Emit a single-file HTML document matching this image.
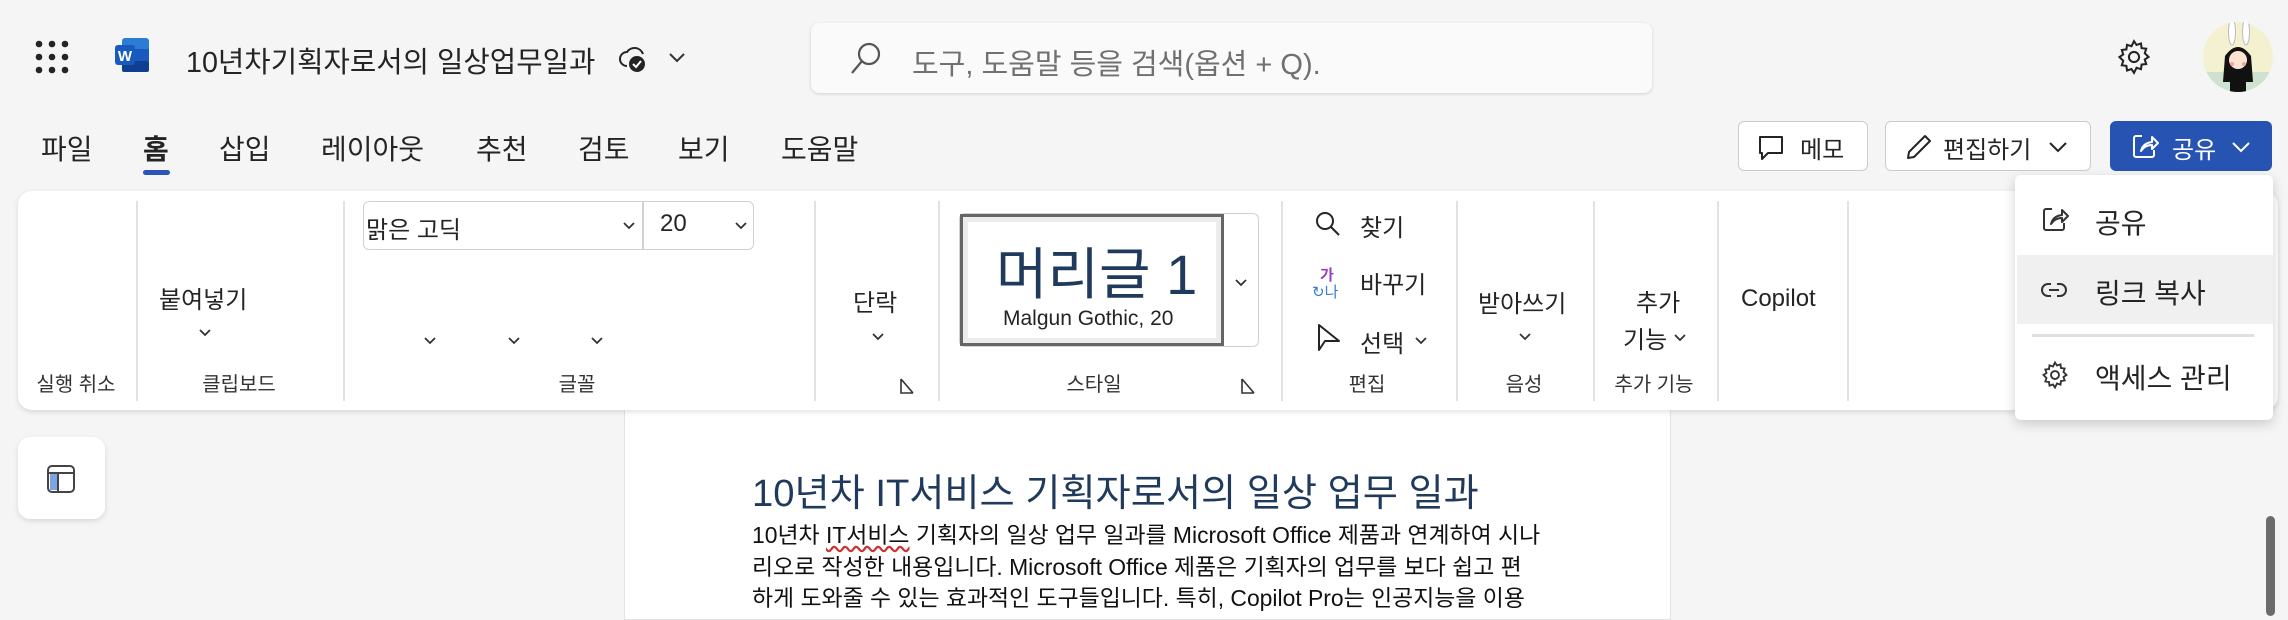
<!DOCTYPE html>
<html><head><meta charset="utf-8">
<style>
*{margin:0;padding:0;box-sizing:border-box}
body{width:2288px;height:606px;overflow:hidden;background:#f5f5f5;position:relative;font-family:"Liberation Sans","Noto Sans CJK KR",sans-serif;color:#242424}
.a{position:absolute;white-space:nowrap}
.dv{position:absolute;top:201px;width:2px;height:200px;background:#e1e1e1}
.lbl{position:absolute;top:368px;font-size:20px;color:#333;transform:translateX(-50%)}
.cv{position:absolute}
</style></head><body>
<svg width="0" height="0" style="position:absolute"><defs><symbol id="ch" viewBox="0 0 14 9"><path d="M2 2l5 5l5-5" stroke="#333" stroke-width="1.8" fill="none"/></symbol></defs></svg>
<!-- grid -->
<svg class="a" style="left:34px;top:39px" width="36" height="36" viewBox="0 0 36 36" fill="#242424">
<circle cx="5" cy="5" r="3.3"/><circle cx="18" cy="5" r="3.3"/><circle cx="31" cy="5" r="3.3"/>
<circle cx="5" cy="18" r="3.3"/><circle cx="18" cy="18" r="3.3"/><circle cx="31" cy="18" r="3.3"/>
<circle cx="5" cy="31" r="3.3"/><circle cx="18" cy="31" r="3.3"/><circle cx="31" cy="31" r="3.3"/></svg>
<!-- word icon -->
<svg class="a" style="left:114px;top:37px" width="36" height="36" viewBox="0 0 36 36">
<rect x="8" y="1" width="27" height="34" rx="3" fill="#2b7cd3"/><rect x="8" y="12" width="27" height="12" fill="#185abd"/><rect x="8" y="24" width="27" height="11" rx="2" fill="#103f91"/>
<rect x="1" y="8" width="20" height="20" rx="3" fill="#185abd"/><text x="11" y="24" font-size="15" fill="#fff" text-anchor="middle" font-family="Liberation Sans" font-weight="bold">W</text></svg>
<div class="a" style="left:186px;top:40px;font-size:28.7px;color:#242424">10년차기획자로서의 일상업무일과</div>
<svg class="a" style="left:617px;top:44px" width="32" height="30" viewBox="0 0 32 30"><path d="M10 22a7 7 0 0 1 0-14a9 9 0 0 1 16 2" fill="none" stroke="#242424" stroke-width="2"/><circle cx="20" cy="20" r="8" fill="#242424"/><path d="M16 20l3 3l5-6" stroke="#fff" stroke-width="2" fill="none"/></svg>
<svg class="a" style="left:668px;top:52px" width="18" height="12"><path d="M2 2l7 7l7-7" stroke="#333" stroke-width="2" fill="none"/></svg>
<!-- search -->
<div class="a" style="left:811px;top:23px;width:841px;height:70px;background:#fafafa;border-radius:8px;box-shadow:0 1px 3px rgba(0,0,0,.15)"></div>
<svg class="a" style="left:848px;top:40px" width="36" height="36" viewBox="0 0 36 36"><circle cx="21" cy="14" r="10" fill="none" stroke="#555" stroke-width="2.2"/><path d="M14 21L4 33" stroke="#555" stroke-width="2.2"/></svg>
<div class="a" style="left:912px;top:41px;font-size:29px;color:#707070">도구, 도움말 등을 검색(옵션 + Q).</div>
<!-- gear -->
<svg class="a" style="left:2115px;top:38px" width="38" height="38" viewBox="0 0 24 24" fill="none" stroke="#242424" stroke-width="1.3"><circle cx="12" cy="12" r="3.2"/><path d="M12 2l1.6 2.4 2.8-.9.4 2.9 2.9.4-.9 2.8L21.2 12l-2.4 1.6.9 2.8-2.9.4-.4 2.9-2.8-.9L12 22l-1.6-2.4-2.8.9-.4-2.9-2.9-.4.9-2.8L2.8 12l2.4-1.6-.9-2.8 2.9-.4.4-2.9 2.8.9z"/></svg>
<!-- avatar -->
<svg class="a" style="left:2203px;top:22px" width="70" height="70" viewBox="0 0 70 70"><clipPath id="c"><circle cx="35" cy="35" r="35"/></clipPath><g clip-path="url(#c)"><rect width="70" height="70" fill="#f3f1cf"/><rect y="50" width="70" height="20" fill="#cfe1d1"/><ellipse cx="29" cy="10" rx="3.5" ry="13" fill="#fff" stroke="#bbb"/><ellipse cx="43" cy="10" rx="3.5" ry="13" fill="#fff" stroke="#bbb"/><path d="M22 34q13-18 26 0l2 26h-30z" fill="#111"/><ellipse cx="35" cy="38" rx="9" ry="9" fill="#fbe3d4"/><circle cx="29" cy="42" r="2" fill="#f5a0a0"/><circle cx="41" cy="42" r="2" fill="#f5a0a0"/><rect x="27" y="50" width="16" height="20" fill="#111"/></g></svg>
<!-- tabs -->
<div class="a" style="left:41px;top:128px;font-size:28px">파일</div>
<div class="a" style="left:143px;top:128px;font-size:28px;font-weight:bold">홈</div>
<div class="a" style="left:143px;top:170px;width:27px;height:5px;border-radius:3px;background:#2b55b4"></div>
<div class="a" style="left:219px;top:128px;font-size:28px">삽입</div>
<div class="a" style="left:321px;top:128px;font-size:28px">레이아웃</div>
<div class="a" style="left:476px;top:128px;font-size:28px">추천</div>
<div class="a" style="left:578px;top:128px;font-size:28px">검토</div>
<div class="a" style="left:678px;top:128px;font-size:28px">보기</div>
<div class="a" style="left:781px;top:128px;font-size:28px">도움말</div>
<!-- buttons -->
<div class="a" style="left:1738px;top:121px;width:130px;height:50px;background:#fff;border:1.5px solid #ccc;border-radius:6px"></div>
<svg class="a" style="left:1756px;top:133px" width="30" height="30" viewBox="0 0 30 30"><path d="M4 4h22v16H12l-6 6v-6H4z" fill="none" stroke="#242424" stroke-width="2" stroke-linejoin="round"/></svg>
<div class="a" style="left:1800px;top:130px;font-size:24px">메모</div>
<div class="a" style="left:1885px;top:121px;width:206px;height:50px;background:#fff;border:1.5px solid #ccc;border-radius:6px"></div>
<svg class="a" style="left:1905px;top:133px" width="28" height="28" viewBox="0 0 28 28"><path d="M20 3l5 5L9 24l-6 1 1-6z" fill="none" stroke="#242424" stroke-width="2" stroke-linejoin="round"/></svg>
<div class="a" style="left:1943px;top:130px;font-size:24px">편집하기</div>
<svg class="a" style="left:2048px;top:140px" width="20" height="14"><path d="M2 3l8 8l8-8" stroke="#242424" stroke-width="2" fill="none"/></svg>
<div class="a" style="left:2110px;top:121px;width:162px;height:50px;background:#2753b3;border-radius:6px"></div>
<svg class="a" style="left:2130px;top:131px" width="30" height="30" viewBox="0 0 30 30" fill="none" stroke="#fff" stroke-width="2"><path d="M12 5H6a2 2 0 0 0-2 2v17a2 2 0 0 0 2 2h16a2 2 0 0 0 2-2v-5"/><path d="M11 20q2-8 11-9V6l6 6-6 6v-4q-7 0-11 6z" stroke-linejoin="round"/></svg>
<div class="a" style="left:2172px;top:130px;font-size:24px;color:#fff">공유</div>
<svg class="a" style="left:2231px;top:140px" width="20" height="14"><path d="M2 3l8 8l8-8" stroke="#fff" stroke-width="2" fill="none"/></svg>
<!-- document page -->
<div class="a" style="left:624px;top:380px;width:1047px;height:240px;background:#fff;border:1px solid #e3e3e3"></div>
<div class="a" style="left:752px;top:463px;font-size:38.2px;color:#1f3a5c">10년차 IT서비스 기획자로서의 일상 업무 일과</div>
<div class="a" style="left:752px;top:520px;font-size:22.9px;line-height:31.5px;color:#111">10년차 <span style="text-decoration:underline wavy #c33">IT서비스</span> 기획자의 일상 업무 일과를 Microsoft Office 제품과 연계하여 시나<br>리오로 작성한 내용입니다. Microsoft Office 제품은 기획자의 업무를 보다 쉽고 편<br>하게 도와줄 수 있는 효과적인 도구들입니다. 특히, Copilot Pro는 인공지능을 이용</div>
<!-- sidebar btn -->
<div class="a" style="left:18px;top:437px;width:87px;height:82px;background:#fff;border-radius:12px;box-shadow:0 2px 6px rgba(0,0,0,.12)"></div>
<svg class="a" style="left:45px;top:463px" width="32" height="32" viewBox="0 0 32 32"><rect x="3" y="3" width="26" height="26" rx="4" fill="none" stroke="#444" stroke-width="2"/><rect x="5" y="10" width="8" height="17" fill="#7aa6e6"/><path d="M3 10h26M13 10v19" stroke="#444" stroke-width="2"/></svg>
<!-- scrollbar -->
<div class="a" style="left:2266px;top:516px;width:9px;height:100px;border-radius:5px;background:#6b6b6b"></div>
<!-- ribbon -->
<div class="a" style="left:18px;top:191px;width:2260px;height:219px;background:#fff;border-radius:14px;box-shadow:0 2px 6px rgba(0,0,0,.12)"></div>
<div class="dv" style="left:136px"></div><div class="dv" style="left:343px"></div><div class="dv" style="left:814px"></div><div class="dv" style="left:938px"></div><div class="dv" style="left:1281px"></div><div class="dv" style="left:1456px"></div><div class="dv" style="left:1593px"></div><div class="dv" style="left:1717px"></div><div class="dv" style="left:1847px"></div>
<div class="lbl" style="left:76px">실행 취소</div>
<div class="lbl" style="left:239px">클립보드</div>
<div class="lbl" style="left:577px">글꼴</div>
<div class="lbl" style="left:1094px">스타일</div>
<div class="lbl" style="left:1367px">편집</div>
<div class="lbl" style="left:1524px">음성</div>
<div class="lbl" style="left:1654px">추가 기능</div>
<div class="a" style="left:159px;top:280px;font-size:24px">붙여넣기</div>
<svg class="cv" style="left:198px;top:328px" width="14" height="9"><use href="#ch"/></svg>
<div class="a" style="left:363px;top:201px;width:391px;height:49px;border:1.5px solid #d1d1d1;border-radius:6px"></div>
<div class="a" style="left:642px;top:201px;width:1.5px;height:49px;background:#d1d1d1"></div>
<div class="a" style="left:366px;top:210px;font-size:24px">맑은 고딕</div>
<svg class="cv" style="left:622px;top:221px" width="14" height="9"><use href="#ch"/></svg>
<div class="a" style="left:660px;top:210px;font-size:24px">20</div>
<svg class="cv" style="left:734px;top:221px" width="14" height="9"><use href="#ch"/></svg>
<svg class="cv" style="left:423px;top:336px" width="14" height="9"><use href="#ch"/></svg>
<svg class="cv" style="left:507px;top:336px" width="14" height="9"><use href="#ch"/></svg>
<svg class="cv" style="left:590px;top:336px" width="14" height="9"><use href="#ch"/></svg>
<div class="a" style="left:853px;top:283px;font-size:24px">단락</div>
<svg class="cv" style="left:871px;top:332px" width="14" height="9"><use href="#ch"/></svg>
<svg class="a" style="left:899px;top:377px" width="16" height="18"><path d="M2 2v14h12M2 2l12 14" stroke="#333" stroke-width="1.6" fill="none"/></svg>
<div class="a" style="left:959px;top:213px;width:300px;height:134px;border:1.5px solid #d1d1d1;border-radius:6px"></div>
<div class="a" style="left:960px;top:214px;width:264px;height:132px;border:3px solid #666;background:#fff;box-shadow:inset 0 0 0 5px #ececec"></div>
<div class="a" style="left:996px;top:230px;font-size:56px;color:#1f3a5c">머리글 1</div>
<div class="a" style="left:1003px;top:307px;font-size:21px;color:#242424">Malgun Gothic, 20</div>
<svg class="cv" style="left:1234px;top:278px" width="14" height="9"><use href="#ch"/></svg>
<svg class="a" style="left:1240px;top:377px" width="16" height="18"><path d="M2 2v14h12M2 2l12 14" stroke="#333" stroke-width="1.6" fill="none"/></svg>
<svg class="a" style="left:1314px;top:210px" width="28" height="28" viewBox="0 0 28 28"><circle cx="11" cy="11" r="8" fill="none" stroke="#242424" stroke-width="2"/><path d="M17 17l8 8" stroke="#242424" stroke-width="2"/></svg>
<div class="a" style="left:1360px;top:208px;font-size:24px">찾기</div>
<div class="a" style="left:1320px;top:264px;font-size:15px;color:#9b3fb8;font-weight:bold">가</div>
<div class="a" style="left:1312px;top:281px;font-size:15px;color:#3b7bd0">↻나</div>
<div class="a" style="left:1360px;top:265px;font-size:24px">바꾸기</div>
<svg class="a" style="left:1316px;top:323px" width="28" height="30" viewBox="0 0 28 30"><path d="M3 2v25l6-9h14z" fill="none" stroke="#242424" stroke-width="2" stroke-linejoin="round"/></svg>
<div class="a" style="left:1360px;top:324px;font-size:24px">선택</div>
<svg class="cv" style="left:1414px;top:336px" width="14" height="9"><use href="#ch"/></svg>
<div class="a" style="left:1478px;top:284px;font-size:24px">받아쓰기</div>
<svg class="cv" style="left:1518px;top:332px" width="14" height="9"><use href="#ch"/></svg>
<div class="a" style="left:1636px;top:283px;font-size:24px">추가</div>
<div class="a" style="left:1623px;top:320px;font-size:24px">기능</div>
<svg class="cv" style="left:1673px;top:333px" width="14" height="9"><use href="#ch"/></svg>
<div class="a" style="left:1741px;top:285px;font-size:24px">Copilot</div>
<!-- dropdown menu -->
<div class="a" style="left:2015px;top:175px;width:258px;height:245px;background:#fff;border-radius:6px;box-shadow:0 4px 12px rgba(0,0,0,.18)"></div>
<svg class="a" style="left:2040px;top:204px" width="30" height="30" viewBox="0 0 30 30" fill="none" stroke="#333" stroke-width="2"><path d="M12 5H6a2 2 0 0 0-2 2v17a2 2 0 0 0 2 2h16a2 2 0 0 0 2-2v-5"/><path d="M11 20q2-8 11-9V6l6 6-6 6v-4q-7 0-11 6z" stroke-linejoin="round"/></svg>
<div class="a" style="left:2095px;top:202px;font-size:28px">공유</div>
<div class="a" style="left:2017px;top:255px;width:256px;height:69px;background:#f0f0f0"></div>
<svg class="a" style="left:2040px;top:276px" width="28" height="28" viewBox="0 0 28 28" fill="none" stroke="#333" stroke-width="2"><path d="M11 8H8a6 6 0 0 0 0 12h3M17 8h3a6 6 0 0 1 0 12h-3M9 14h10"/></svg>
<div class="a" style="left:2095px;top:272px;font-size:28px">링크 복사</div>
<div class="a" style="left:2032px;top:334px;width:222px;height:3px;background:#e0e0e0"></div>
<svg class="a" style="left:2040px;top:360px" width="30" height="30" viewBox="0 0 24 24" fill="none" stroke="#333" stroke-width="1.5"><circle cx="12" cy="12" r="3.2"/><path d="M12 2l1.6 2.4 2.8-.9.4 2.9 2.9.4-.9 2.8L21.2 12l-2.4 1.6.9 2.8-2.9.4-.4 2.9-2.8-.9L12 22l-1.6-2.4-2.8.9-.4-2.9-2.9-.4.9-2.8L2.8 12l2.4-1.6-.9-2.8 2.9-.4.4-2.9 2.8.9z"/></svg>
<div class="a" style="left:2095px;top:357px;font-size:28px">액세스 관리</div>
</body></html>
